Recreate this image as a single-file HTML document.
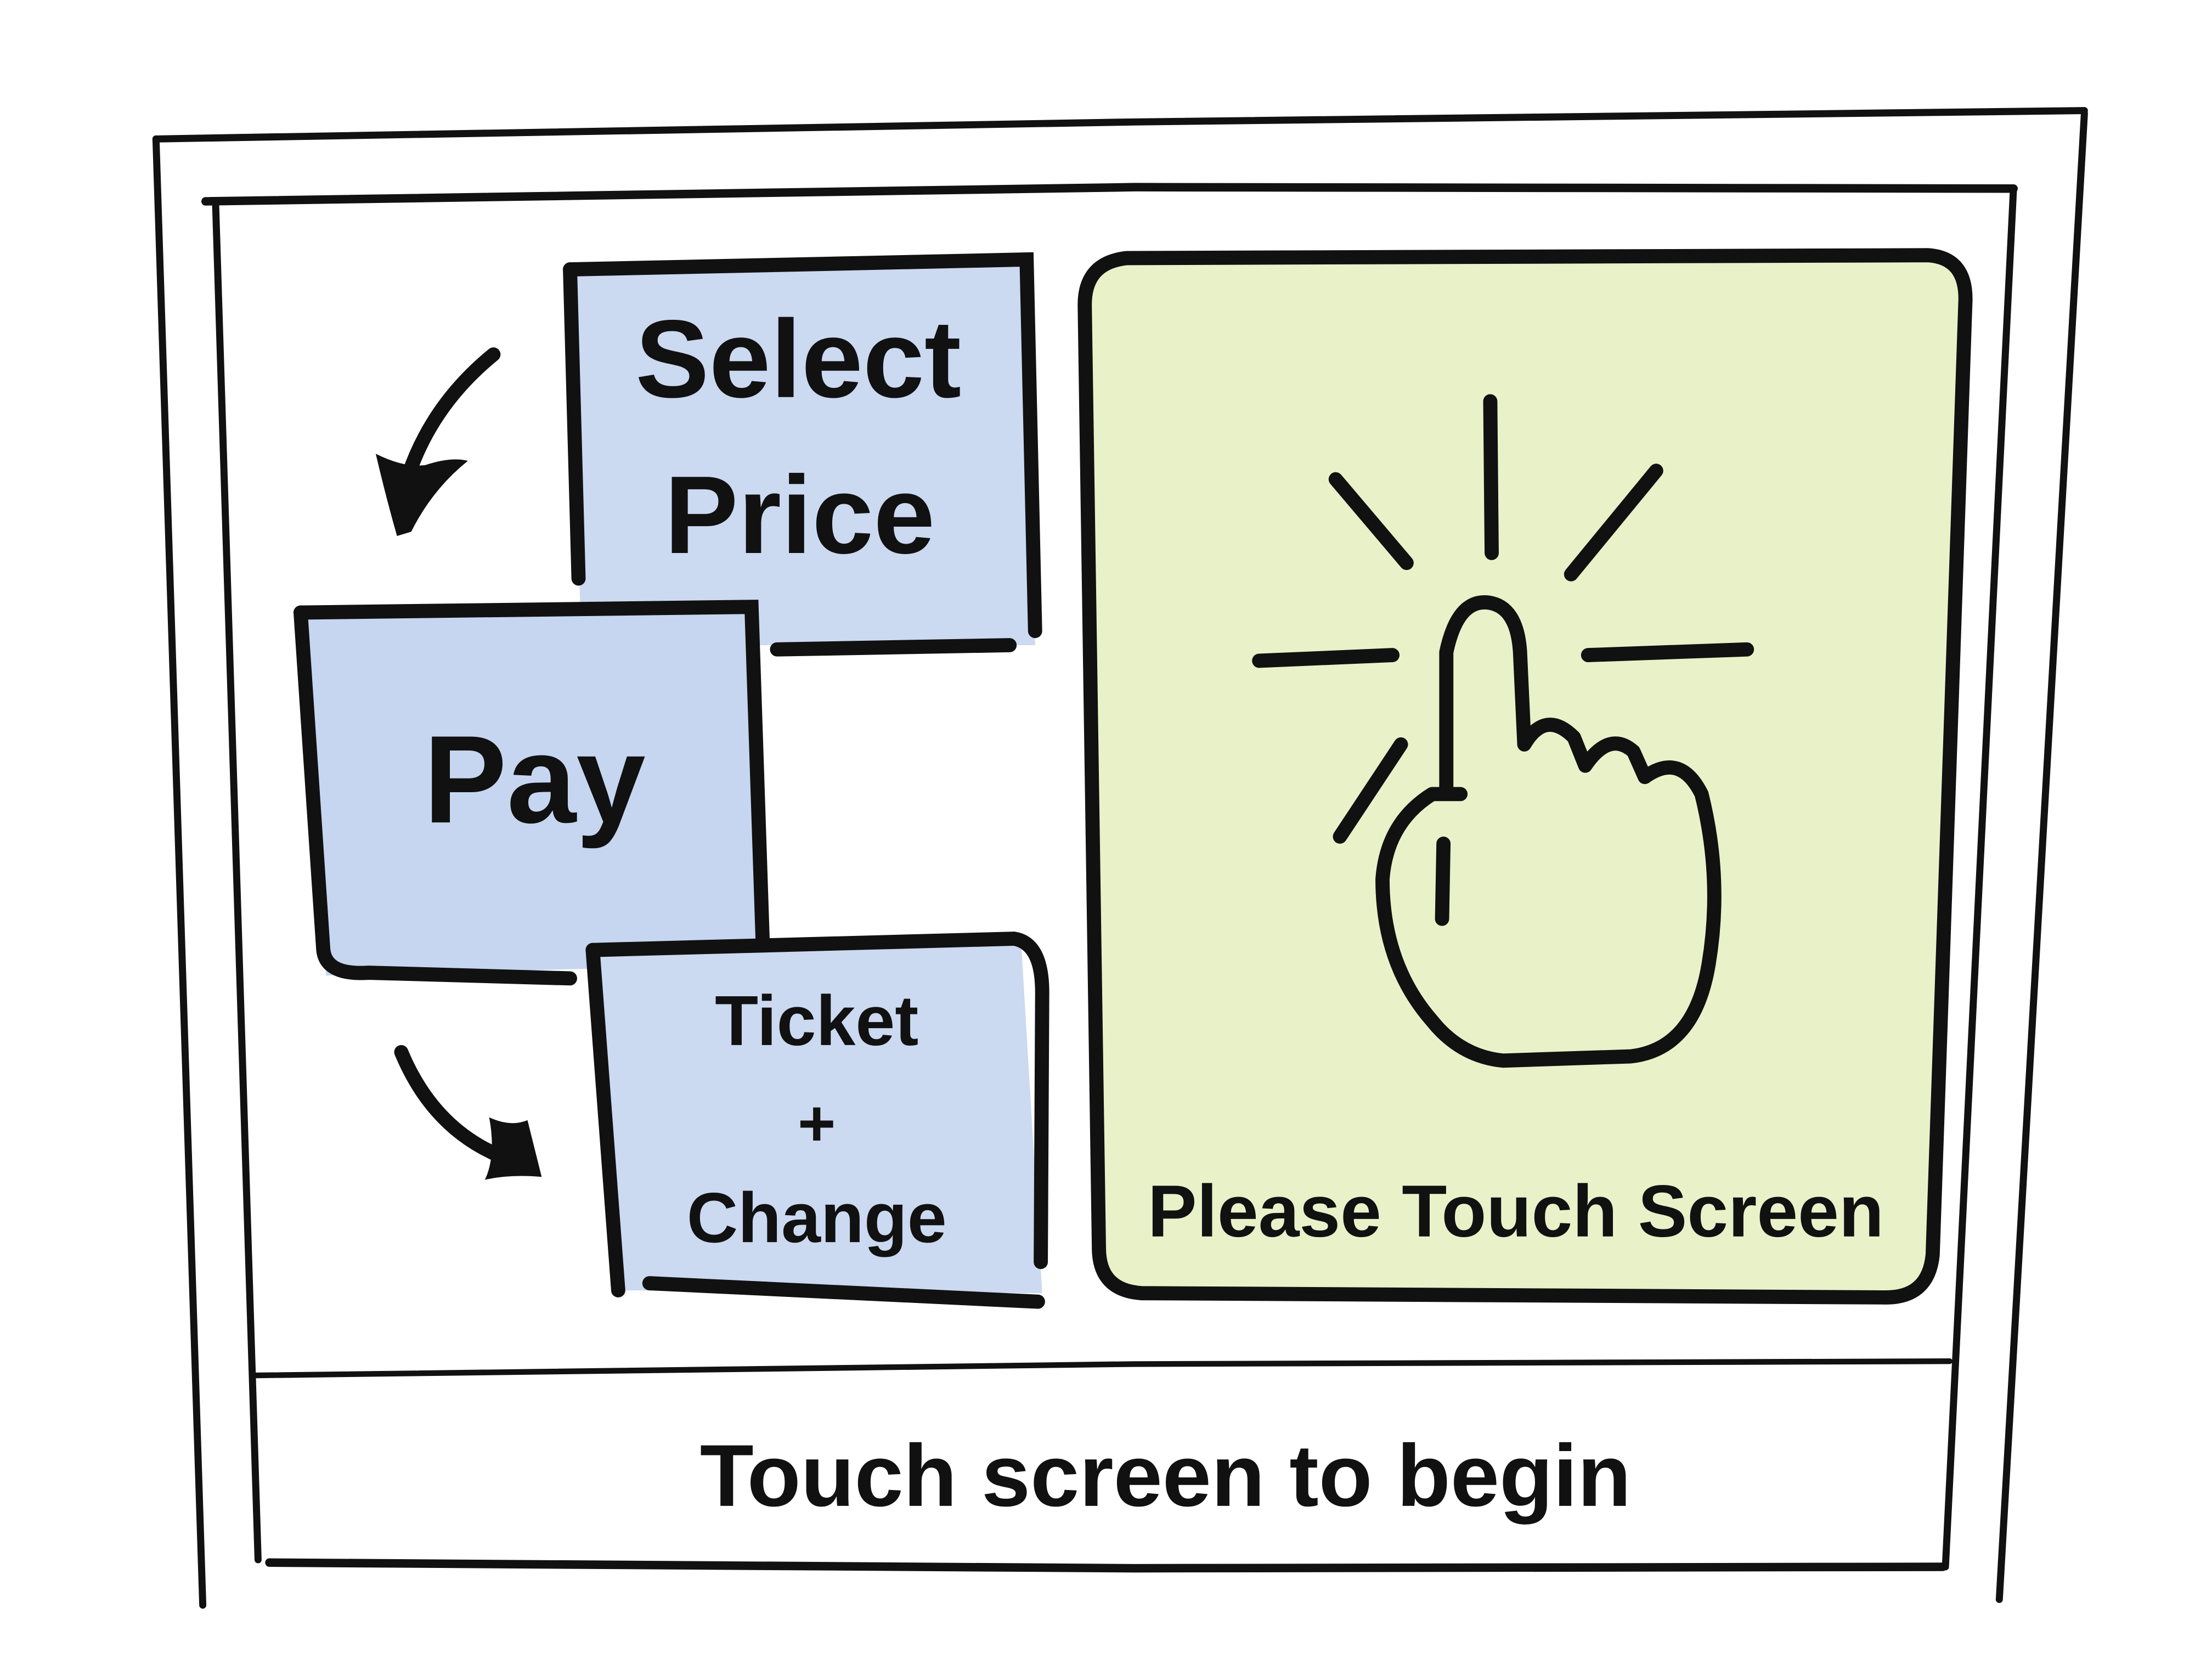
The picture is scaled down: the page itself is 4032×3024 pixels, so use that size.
<!DOCTYPE html>
<html><head><meta charset="utf-8"><style>
html,body{margin:0;padding:0;background:#fff;}
svg{display:block;}
text{font-family:"Liberation Sans",sans-serif;font-weight:bold;fill:#111;text-anchor:middle;}
</style></head><body>
<svg width="4032" height="3024" viewBox="0 0 1560 1170" xmlns="http://www.w3.org/2000/svg">
<rect width="1560" height="1170" fill="#fff"/>
<g fill="none" stroke="#111" stroke-linecap="round" stroke-linejoin="round">
<path d="M110 98 L800 86 L1470 78" stroke-width="5"/>
<path d="M110 98 L143 1132" stroke-width="5"/>
<path d="M1470 80 L1410 1128" stroke-width="5"/>
<path d="M145 142 L800 132 L1420 133" stroke-width="6"/>
<path d="M152 142 L182 1100" stroke-width="5"/>
<path d="M1420 133 L1372 1105" stroke-width="5"/>
<path d="M180 970 L800 962 L1375 960" stroke-width="4"/>
<path d="M190 1102 L800 1106 L1370 1105" stroke-width="6"/>
</g>
<!-- Select Price box -->
<path d="M402 188 L725 182 L730 455 L410 455 Z" fill="#cbd9f1"/>
<g fill="none" stroke="#111" stroke-width="10" stroke-linecap="round">
<path d="M402 190 L724 183 L730 445"/>
<path d="M402 190 L408 408"/>
<path d="M548 458 L712 455"/>
</g>
<text x="563" y="280" font-size="78">Select</text>
<text x="564" y="390" font-size="78">Price</text>
<!-- Pay box -->
<path d="M212 432 L530 430 L538 680 L230 688 Z" fill="#c6d6f0"/>
<g fill="none" stroke="#111" stroke-width="10" stroke-linecap="round">
<path d="M212 432 L530 428 L538 668"/>
<path d="M212 432 L228 670 Q230 688 260 686 L402 690"/>
</g>
<text x="377" y="580" font-size="88">Pay</text>
<!-- Ticket box -->
<path d="M418 670 L720 662 L735 912 L432 910 Z" fill="#cbd9f1"/>
<g fill="none" stroke="#111" stroke-width="10" stroke-linecap="round">
<path d="M418 670 L715 662 Q735 665 735 700 L734 890"/>
<path d="M418 670 L436 910"/>
<path d="M458 905 L732 918"/>
</g>
<text x="576" y="737" font-size="50">Ticket</text>
<text x="576" y="808" font-size="46">+</text>
<text x="576" y="876" font-size="50">Change</text>
<!-- green box -->
<path d="M795 182 L1360 180 Q1388 182 1386 215 L1363 885 Q1360 915 1330 915 L805 912 Q775 910 775 880 L765 215 Q765 185 795 182 Z" fill="#e9f1c9" stroke="#111" stroke-width="10"/>
<text x="1069" y="872" font-size="52">Please Touch Screen</text>
<!-- hand -->
<g fill="none" stroke="#111" stroke-width="10" stroke-linecap="round" stroke-linejoin="round">
<path d="M1051 283 L1052 390"/>
<path d="M942 338 L992 397"/>
<path d="M1168 332 L1108 405"/>
<path d="M888 466 L982 462"/>
<path d="M1120 462 L1232 458"/>
<path d="M988 525 L945 590"/>
<path d="M1018 595 L1017 648"/>
<path d="M1020 560 L1020 460 Q1028 422 1050 425 Q1070 428 1072 460 L1075 525 Q1090 500 1110 520 L1118 540 Q1135 515 1152 530 L1160 548 Q1185 530 1200 560 Q1215 620 1205 680 Q1195 740 1150 745 L1060 748 Q1030 745 1010 720 Q975 680 975 620 Q978 580 1010 560 L1030 560"/>
</g>
<!-- arrows -->
<g fill="none" stroke="#111" stroke-width="10" stroke-linecap="round" stroke-linejoin="round">
<path d="M348 250 Q305 285 288 335"/>
<path d="M283 742 Q305 795 352 815"/>
</g>
<path d="M265 320 Q285 330 300 328 Q318 322 330 325 Q305 345 290 375 L280 378 Q272 350 265 320 Z" fill="#111"/>
<path d="M345 788 Q360 795 372 790 L382 830 Q360 828 342 832 Q350 815 345 788 Z" fill="#111"/>
<text x="822" y="1062" font-size="62">Touch screen to begin</text>
</svg>
</body></html>
